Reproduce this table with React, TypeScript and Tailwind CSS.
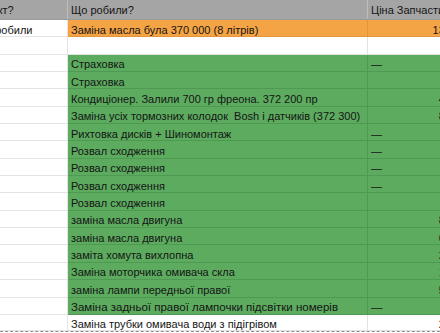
const GREEN = "green";
const ORANGE = "orange";
const WHITE = "white";

type Row = { a?: string; b: string; c?: string; fill: string; size?: string };

const rows: Row[] = [
  { a: "Самі робили", b: "Заміна масла була 370 000 (8 літрів)", c: "1300", fill: ORANGE },
  { b: "", fill: WHITE },
  { b: "Страховка", c: "—", fill: GREEN },
  { b: "Страховка", fill: GREEN },
  { b: "Кондиціонер. Залили 700 гр фреона. 372 200 пр", c: "450", fill: GREEN },
  { b: "Заміна усіх тормозних колодок  Bosh і датчиків (372 300)", c: "800", fill: GREEN },
  { b: "Рихтовка дисків + Шиномонтаж", c: "—", fill: GREEN },
  { b: "Розвал сходження", c: "—", fill: GREEN },
  { b: "Розвал сходження", c: "—", fill: GREEN },
  { b: "Розвал сходження", c: "—", fill: GREEN },
  { b: "Розвал сходження", fill: GREEN },
  { b: "заміна масла двигуна", c: "850", fill: GREEN },
  { b: "заміна масла двигуна", c: "650", fill: GREEN },
  { b: "заміта хомута вихлопна", c: "250", fill: GREEN },
  { b: "Заміна моторчика омивача скла", c: "150", fill: GREEN },
  { b: "заміна лампи передньої правої", c: "550", fill: GREEN },
  { b: "Заміна задньої правої лампочки підсвітки номерів", c: "—", fill: GREEN, size: "text-[11.5px]" },
  { b: "Заміна трубки омивача води з підігрівом", c: "250", fill: WHITE },
];

function cellBg(fill: string) {
  if (fill === ORANGE) return "bg-[#f5a445] border-[#e3953a]";
  if (fill === GREEN) return "bg-[#5cab5f] border-[#4e9a52]";
  return "bg-white border-[#e2e2e2]";
}

export default function App() {
  return (
    <div className="w-[440px] h-[333px] overflow-hidden bg-white font-['Liberation_Sans',Arial,sans-serif] text-[11px] leading-[13px] text-[#151515]">
      <div className="ml-[-35px] flex flex-col w-max">
        {/* header */}
        <div className="flex h-[20px] bg-[#a5a5a5] border-b border-[#9a9a9a]">
          <div className="w-[103px] shrink-0 px-[3px] pt-[4px] border-r border-[#bdbdbd] whitespace-nowrap">Контакт?</div>
          <div className="w-[300px] shrink-0 px-[3px] pt-[4px] border-r border-[#bdbdbd]">Що робили?</div>
          <div className="w-[92px] shrink-0 px-[3px] pt-[4px] whitespace-nowrap overflow-hidden">Ціна Запчастин</div>
        </div>

        {rows.map((r, i) => {
          const last = i === rows.length - 1;
          const isDash = r.c === "—";
          return (
            <div key={i} className={`flex h-[17.35px] ${last ? "border-b border-dashed border-[#8a8a8a]" : ""}`}>
              <div className="w-[103px] shrink-0 px-[3px] pt-[4px] bg-white border-b border-r border-[#e4e4e4] whitespace-nowrap overflow-hidden">
                {r.a}
              </div>
              <div
                className={`w-[300px] shrink-0 px-[3px] pt-[3.5px] border-b border-r whitespace-pre overflow-hidden ${r.size ?? ""} ${cellBg(
                  r.fill
                )}`}
              >
                {r.b}
              </div>
              <div
                className={`w-[92px] shrink-0 px-[3px] pt-[3.5px] border-b whitespace-nowrap overflow-hidden ${r.size ?? ""} ${
                  isDash ? "text-left" : "text-right"
                } ${cellBg(r.fill)}`}
              >
                {r.c}
              </div>
            </div>
          );
        })}
      </div>
    </div>
  );
}
